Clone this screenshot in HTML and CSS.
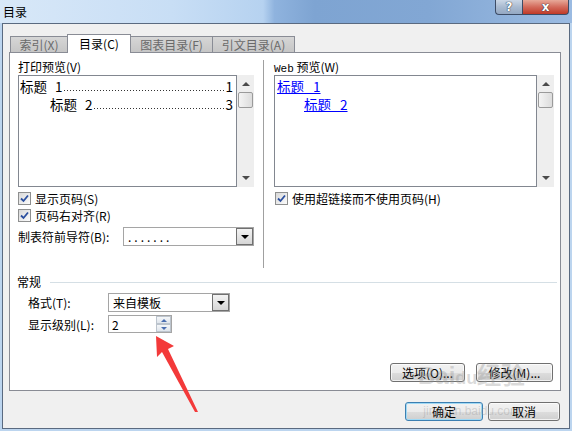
FILE: index.html
```html
<!DOCTYPE html>
<html lang="zh-CN">
<head>
    <meta charset="UTF-8">
    <title>目录</title>
    <link rel="stylesheet" href="styles.css">
</head>
<body>

<div class="window">
    <!-- Title bar -->
    <div class="titlebar">
        <span class="title">目录</span>
        <div class="caption-buttons">
            <div class="cap-btn help">?</div>
            <div class="cap-btn close">x</div>
        </div>
    </div>

    <div class="client">
        <!-- Tabs -->
        <div class="tabs">
            <div class="tab t1">索引(X)</div>
            <div class="tab t2 active">目录(C)</div>
            <div class="tab t3">图表目录(F)</div>
            <div class="tab t4">引文目录(A)</div>
        </div>

        <div class="panel">
            <div class="top">
                <!-- Print preview -->
                <div class="col left">
                    <div class="label">打印预览(V)</div>
                    <div class="preview">
                        <div class="list">
                            <div class="toc-line"><span>标题</span><span class="num">1</span><span class="leader"></span><span>1</span></div>
                            <div class="toc-line level2"><span>标题</span><span class="num">2</span><span class="leader"></span><span>3</span></div>
                        </div>
                        <div class="scrollbar">
                            <div class="sb-up"></div>
                            <div class="sb-thumb"></div>
                            <div class="sb-down"></div>
                        </div>
                    </div>
                    <div class="check first">
                        <span class="box"><svg width="11" height="11" viewBox="0 0 11 11"><path d="M2 5.5 L4.5 8 L9 2.5" fill="none" stroke="#2b4f9f" stroke-width="1.8"/></svg></span>
                        显示页码(S)
                    </div>
                    <div class="check">
                        <span class="box"><svg width="11" height="11" viewBox="0 0 11 11"><path d="M2 5.5 L4.5 8 L9 2.5" fill="none" stroke="#2b4f9f" stroke-width="1.8"/></svg></span>
                        页码右对齐(R)
                    </div>
                    <div class="field-row">
                        <span>制表符前导符(B):</span>
                        <div class="select leader-select">
                            <span class="dots">.......</span>
                            <span class="drop"></span>
                        </div>
                    </div>
                </div>

                <div class="divider"></div>

                <!-- Web preview -->
                <div class="col right">
                    <div class="label"><span class="mono">Web</span> 预览(W)</div>
                    <div class="preview">
                        <div class="list web">
                            <div class="link-line"><span class="link">标题 1</span></div>
                            <div class="link-line level2"><span class="link">标题 2</span></div>
                        </div>
                        <div class="scrollbar">
                            <div class="sb-up"></div>
                            <div class="sb-thumb"></div>
                            <div class="sb-down"></div>
                        </div>
                    </div>
                    <div class="check first web-check">
                        <span class="box"><svg width="11" height="11" viewBox="0 0 11 11"><path d="M2 5.5 L4.5 8 L9 2.5" fill="none" stroke="#2b4f9f" stroke-width="1.8"/></svg></span>
                        使用超链接而不使用页码(H)
                    </div>
                </div>
            </div>

            <!-- General -->
            <div class="group-title"><span>常规</span><span class="rule"></span></div>
            <div class="form-row">
                <span class="form-label">格式(T):</span>
                <div class="select format-select">
                    <span>来自模板</span>
                    <span class="drop"></span>
                </div>
            </div>
            <div class="form-row">
                <span class="form-label">显示级别(L):</span>
                <div class="spin">
                    <span>2</span>
                    <div class="spin-btns">
                        <span class="sb up"></span>
                        <span class="sb down"></span>
                    </div>
                </div>
            </div>

            <div class="panel-buttons">
                <button class="btn options">选项(O)...</button>
                <button class="btn modify">修改(M)...</button>
            </div>
        </div>

        <div class="dialog-buttons">
            <button class="btn default ok">确定</button>
            <button class="btn cancel">取消</button>
        </div>
    </div>
</div>

<!-- Annotation arrow -->
<svg class="arrow" width="572" height="431" viewBox="0 0 572 431">
    <polygon points="156,336 174,346 168,349 198,412 195,412 162,352 157,357" fill="#f33a3a"/>
</svg>

<!-- Watermark -->
<div class="watermark">
    <span class="wm-big">Bai<span class="wm-du">du</span>经验</span>
    <span class="wm-small">jingyan.baidu.com</span>
</div>

</body>
</html>
```

FILE: styles.css
```css
body {
    margin: 0;
    font-family: "Noto Sans CJK SC", sans-serif;
    font-size: 12px;
    color: #000;
    background: #bcd5ef;
    position: relative;
    overflow: hidden;
}

.window {
    width: 572px;
    height: 431px;
    display: flex;
    flex-direction: column;
}

/* Title bar */
.titlebar {
    height: 23px;
    display: flex;
    align-items: flex-start;
    background: linear-gradient(to right, #d8e8f8 0%, #c8def5 30%, #b6d2f0 46%, #8fb3de 48%, #7ea4d2 55%, #82a7d4 75%, #9bbbe2 100%);
}

.title {
    padding-left: 3px;
    line-height: 23px;
}

.caption-buttons {
    margin-left: auto;
    margin-right: 3px;
    display: flex;
}

.cap-btn {
    height: 15px;
    box-sizing: border-box;
    border: 1px solid #3d4c66;
    border-top: none;
    display: flex;
    align-items: center;
    justify-content: center;
    color: #fff;
    font-family: "DejaVu Sans", sans-serif;
    font-weight: bold;
    font-size: 12px;
    line-height: 12px;
    text-shadow: 0 0 1px #1c2a3c, 0 0 1px #1c2a3c;
}

.help {
    width: 27px;
    border-right: none;
    border-radius: 0 0 0 4px;
    background: linear-gradient(#cbd7e6, #a9bad0 50%, #94a8c3);
}

.close {
    width: 47px;
    border-radius: 0 0 4px 0;
    background: linear-gradient(#e7a999, #d36a5b 50%, #c03a28);
}

/* Client area */
.client {
    flex: 1;
    margin: 0 2px 2px;
    border: 1px solid #5a6a80;
    background: #f0f0f0;
    padding: 10px 0 0 6px;
    display: flex;
    flex-direction: column;
}

.tabs {
    display: flex;
    align-items: flex-end;
    height: 18px;
    padding-left: 1px;
}

.tab {
    box-sizing: border-box;
    height: 16px;
    border: 1px solid #898c95;
    border-bottom: none;
    background: linear-gradient(#d6d6d6, #c6c6c6);
    color: #6a6a6a;
    text-align: center;
    line-height: 15px;
    margin-right: -1px;
}

.tab.active {
    height: 19px;
    margin-bottom: -1px;
    background: #fff;
    color: #000;
    line-height: 18px;
    position: relative;
    z-index: 1;
}

.t1 { width: 58px; }
.t2 { width: 64px; }
.t3 { width: 83px; }
.t4 { width: 83px; }

.panel {
    width: 552px;
    height: 339px;
    box-sizing: border-box;
    border: 1px solid #898c95;
    background: #fff;
    padding: 5px 4px 8px 8px;
    display: flex;
    flex-direction: column;
}

.top {
    display: flex;
    height: 210px;
}

.col.left { width: 236px; }
.col.right { width: 280px; }

.divider {
    width: 1px;
    height: 208px;
    margin: 2px 10px 0 9px;
    background: #a0a0a0;
}

.label {
    height: 17px;
    line-height: 17px;
}

.mono {
    font-family: "Liberation Mono", monospace;
    font-size: 11px;
}

.preview {
    display: flex;
    height: 112px;
}

.list {
    flex: 1;
    box-sizing: border-box;
    border: 1px solid #828790;
    background: #fff;
    padding: 1px 3px 0 1px;
}

.toc-line {
    display: flex;
    height: 18px;
    line-height: 18px;
    font-size: 13.5px;
}

.toc-line .num {
    margin-left: 8px;
}

.leader {
    flex: 1;
    height: 1px;
    margin: 13px 2px 0 1px;
    background: repeating-linear-gradient(to right, #333 0 1px, transparent 1px 3px);
}

.level2 {
    padding-left: 30px;
}

.list.web {
    padding-left: 2px;
}

.link-line {
    height: 18px;
    line-height: 18px;
    font-size: 13.5px;
}

.link-line.level2 {
    padding-left: 27px;
}

.link {
    color: #0000ff;
    text-decoration: underline;
    word-spacing: 6px;
}

/* Scrollbars */
.scrollbar {
    width: 17px;
    background: #eeeeee;
    display: flex;
    flex-direction: column;
    align-items: center;
}

.sb-up,
.sb-down {
    width: 0;
    height: 0;
    border-left: 4px solid transparent;
    border-right: 4px solid transparent;
}

.sb-up {
    margin-top: 7px;
    border-bottom: 4px solid #4a4a4a;
}

.sb-down {
    margin-top: auto;
    margin-bottom: 7px;
    border-top: 4px solid #4a4a4a;
}

.sb-thumb {
    width: 15px;
    height: 16px;
    box-sizing: border-box;
    margin-top: 6px;
    border: 1px solid #9a9a9a;
    border-radius: 2px;
    background: linear-gradient(to right, #f4f4f4, #dcdcdc);
}

/* Checkboxes */
.check {
    display: flex;
    align-items: center;
    height: 17px;
}

.check.first {
    margin-top: 3px;
}

.web-check {
    margin-left: 1px;
}

.box {
    width: 13px;
    height: 13px;
    box-sizing: border-box;
    border: 1px solid #8e8f8f;
    background: linear-gradient(135deg, #d8d8d8, #fcfcfc);
    margin-right: 4px;
    display: flex;
}

/* Selects */
.field-row {
    display: flex;
    align-items: center;
    margin-top: 3px;
}

.select {
    box-sizing: border-box;
    height: 19px;
    border: 1px solid #a5a5a5;
    background: #fff;
    display: flex;
    align-items: center;
    padding-left: 4px;
}

.leader-select {
    width: 131px;
    margin-left: auto;
}

.dots {
    letter-spacing: 3px;
}

.format-select {
    width: 122px;
}

.drop {
    margin-left: auto;
    width: 17px;
    height: 17px;
    box-sizing: border-box;
    border: 1px solid #707070;
    background: linear-gradient(#f3f3f3, #d6d6d6);
    display: flex;
    align-items: center;
    justify-content: center;
}

.drop::after {
    content: "";
    border-left: 4px solid transparent;
    border-right: 4px solid transparent;
    border-top: 4px solid #000;
}

/* General group */
.group-title {
    display: flex;
    align-items: center;
    height: 18px;
    margin-top: 4px;
    margin-left: -1px;
}

.rule {
    flex: 1;
    height: 1px;
    margin: 2px -1px 0 9px;
    background: #d5dfe5;
}

.form-row {
    display: flex;
    align-items: center;
    margin-top: 3px;
    padding-left: 10px;
}

.form-label {
    width: 80px;
}

.spin {
    width: 64px;
    height: 18px;
    box-sizing: border-box;
    border: 1px solid #a5a5a5;
    display: flex;
    align-items: center;
    padding-left: 3px;
}

.spin-btns {
    margin-left: auto;
    width: 15px;
    height: 16px;
    display: flex;
    flex-direction: column;
}

.spin-btns .sb {
    flex: 1;
    box-sizing: border-box;
    border: 1px solid #bcc4cd;
    background: linear-gradient(#f5f7f9, #dfe5ec);
    display: flex;
    align-items: center;
    justify-content: center;
}

.sb.up::after {
    content: "";
    border-left: 3px solid transparent;
    border-right: 3px solid transparent;
    border-bottom: 3px solid #4b6eb0;
}

.sb.down::after {
    content: "";
    border-left: 3px solid transparent;
    border-right: 3px solid transparent;
    border-top: 3px solid #4b6eb0;
}

/* Buttons */
.btn {
    box-sizing: border-box;
    height: 19px;
    padding: 0;
    border: 1px solid #707070;
    border-radius: 3px;
    background: linear-gradient(#f2f2f2 0%, #ebebeb 50%, #dddddd 51%, #cfcfcf 100%);
    box-shadow: inset 0 0 0 1px rgba(255, 255, 255, 0.7);
    font-family: inherit;
    font-size: 12px;
    color: #000;
}

.panel-buttons {
    margin-top: auto;
    margin-right: 3px;
    display: flex;
    justify-content: flex-end;
    gap: 11px;
}

.options { width: 75px; }
.modify { width: 77px; }

.dialog-buttons {
    display: flex;
    justify-content: flex-end;
    gap: 5px;
    margin: 11px 9px 0 0;
}

.ok { width: 78px; }
.cancel { width: 72px; }

.btn.default {
    border-color: #3c7fb1;
    box-shadow: inset 0 0 0 1px #9fd9f5;
}

/* Overlays */
.arrow {
    position: absolute;
    left: 0;
    top: 0;
    pointer-events: none;
}

.watermark {
    position: absolute;
    left: 418px;
    top: 362px;
    display: flex;
    flex-direction: column;
    align-items: center;
    color: rgba(150, 150, 150, 0.35);
    pointer-events: none;
}

.wm-big {
    font-family: "Liberation Sans", sans-serif;
    font-size: 24px;
    font-weight: bold;
    line-height: 28px;
}

.wm-du {
    font-size: 18px;
}

.wm-small {
    font-family: "Liberation Sans", sans-serif;
    font-size: 12px;
    margin-top: 12px;
}
```
